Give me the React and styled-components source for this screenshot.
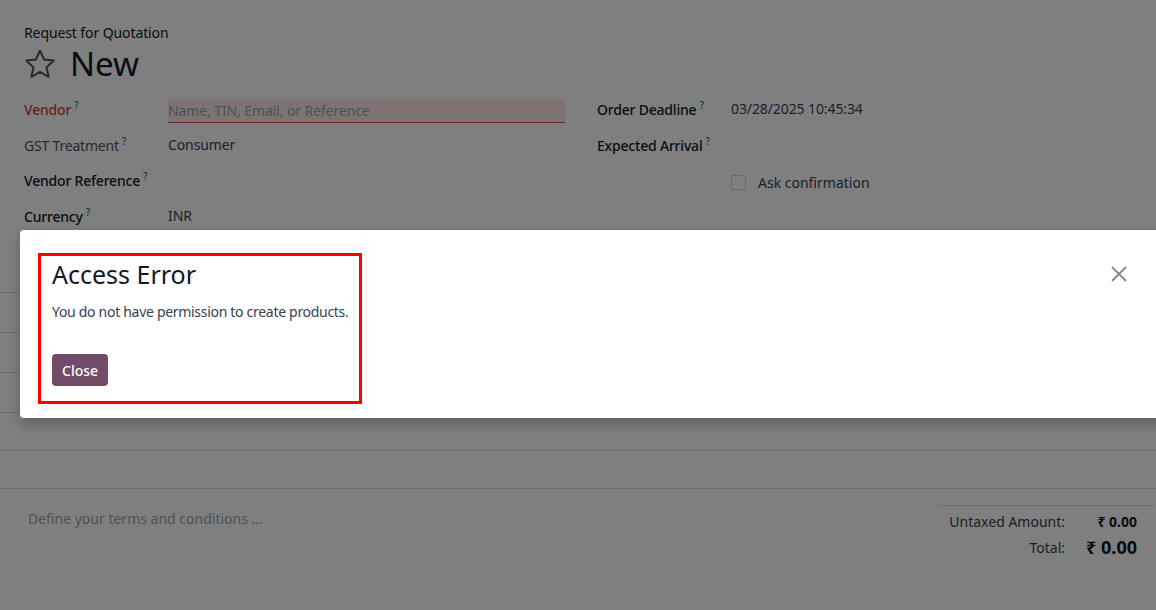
import React from "react";
import styled, { createGlobalStyle } from "styled-components";

const Global = createGlobalStyle`
  html, body { margin: 0; padding: 0; }
  body {
    width: 1156px; height: 610px; overflow: hidden;
    font-family: "Noto Sans", "DejaVu Sans", sans-serif;
    font-size: 14px; color: #374151; background: #fff;
  }
`;

const Page = styled.div`
  position: relative;
  width: 1156px;
  height: 610px;
  background: #fff;
  overflow: hidden;
`;

const Sheet = styled.div`
  padding: 24px 0 0 0;
`;

const Header = styled.div`
  padding: 0 24px;
`;

const Kicker = styled.div`
  font-size: 14px;
  color: #111827;
  line-height: 18px;
  letter-spacing: -0.1px;
`;

const TitleRow = styled.div`
  display: flex;
  align-items: center;
  gap: 14px;
  margin-top: 2px;
  height: 40px;
`;

const Title = styled.h1`
  margin: 0;
  font-size: 33px;
  font-weight: 400;
  color: #111827;
  line-height: 40px;
`;

const Groups = styled.div`
  display: grid;
  grid-template-columns: 573px 1fr;
  padding: 0 24px;
  margin-top: 6px;
`;

const Group = styled.div`
  display: grid;
  grid-template-columns: ${(p) => p.$label}px 1fr;
  grid-template-rows: ${(p) => p.$rows};
  align-items: center;
  padding-right: ${(p) => p.$pr || 0}px;
`;

const Label = styled.div`
  font-size: 14px;
  font-weight: ${(p) => (p.$light ? 400 : 500)};
  color: ${(p) => (p.$invalid ? "#d23f3a" : p.$light ? "#4b5563" : "#111827")};
  white-space: nowrap;
  letter-spacing: -0.2px;
`;

const Help = styled.sup`
  color: #017e84;
  font-size: 10px;
  margin-left: 3px;
  font-weight: 500;
`;

const Value = styled.div`
  font-size: 14px;
  color: #374151;
  letter-spacing: -0.1px;
`;

const VendorInput = styled.div`
  height: 23px;
  margin-top: 5px;
  background: #ffe5e5;
  border-bottom: 1px solid #d23f3a;
  color: #9ca3af;
  display: flex;
  align-items: center;
  font-size: 14px;
  letter-spacing: -0.1px;
`;

const CheckRow = styled.div`
  display: flex;
  align-items: center;
  gap: 12px;
  color: #374151;
`;

const Box = styled.span`
  width: 13px;
  height: 13px;
  border: 1px solid #d1d5db;
  border-radius: 2px;
  background: #fff;
`;

const Lines = styled.div`
  margin-top: 58px;
`;

const Line = styled.div`
  height: ${(p) => p.$h}px;
  border-bottom: 1px solid #d8dadd;
`;

const Bottom = styled.div`
  display: flex;
  justify-content: space-between;
  padding: 16px 2px 0 28px;
`;

const Terms = styled.div`
  color: #9ca3af;
  font-size: 14px;
  padding-top: 4px;
`;

const Totals = styled.div`
  width: 199px;
  border-top: 1px solid #d8dadd;
  padding-top: 6px;
  padding-right: 17px;
  display: grid;
  grid-template-columns: 1fr 72px;
  row-gap: 4px;
  align-items: center;
`;

const TotLabel = styled.div`
  text-align: right;
  color: #374151;
  font-size: 14px;
`;

const TotValue = styled.div`
  text-align: right;
  font-weight: 700;
  color: #111827;
  font-size: ${(p) => (p.$big ? 18 : 14)}px;
`;

const Backdrop = styled.div`
  position: absolute;
  inset: 0;
  background: rgba(0, 0, 0, 0.5);
`;

const Modal = styled.div`
  position: absolute;
  left: 20px;
  top: 230px;
  width: 1160px;
  height: 188px;
  background: #fff;
  border-radius: 4px;
  box-shadow: 0 6px 14px rgba(0, 0, 0, 0.25);
  padding: 23px 0 0 18px;
  box-sizing: border-box;
`;

const Highlight = styled.div`
  width: 324px;
  height: 151px;
  box-sizing: border-box;
  border: 3px solid #ff0000;
  padding: 2px 0 0 11px;
`;

const ModalTitle = styled.h4`
  margin: 0;
  font-size: 25px;
  font-weight: 400;
  color: #111827;
  line-height: 32px;
`;

const ModalBody = styled.p`
  margin: 12px 0 0;
  font-size: 14px;
  color: #374151;
  line-height: 20px;
  white-space: nowrap;
  letter-spacing: -0.3px;
`;

const Button = styled.button`
  margin-top: 32px;
  height: 32px;
  padding: 0 10px;
  background: #714b67;
  color: #fff;
  border: none;
  border-radius: 4px;
  font-family: inherit;
  font-size: 14px;
  font-weight: 500;
  display: block;
`;

const CloseX = styled.button`
  position: absolute;
  right: 51px;
  top: 34px;
  width: 20px;
  height: 20px;
  padding: 0;
  border: none;
  background: transparent;
  display: flex;
  align-items: center;
  justify-content: center;
`;

const Star = () => (
  <svg width="32" height="30" viewBox="0 0 32 30" fill="none">
    <path
      d="M16 1.8 L20.2 10.6 L29.8 11.6 L22.6 18.2 L24.6 27.8 L16 22.9 L7.4 27.8 L9.4 18.2 L2.2 11.6 L11.8 10.6 Z"
      stroke="#4b5563"
      strokeWidth="2"
      strokeLinejoin="round"
    />
  </svg>
);

export default function App() {
  return (
    <>
      <Global />
      <Page>
        <Sheet>
          <Header>
            <Kicker>Request for Quotation</Kicker>
            <TitleRow>
              <Star />
              <Title>New</Title>
            </TitleRow>
          </Header>
          <Groups>
            <Group $label={144} $pr={32} $rows="36px 36px 34px 38px">
              <Label $invalid>
                Vendor<Help>?</Help>
              </Label>
              <VendorInput>Name, TIN, Email, or Reference</VendorInput>
              <Label $light>
                GST Treatment<Help>?</Help>
              </Label>
              <Value>Consumer</Value>
              <Label>
                Vendor Reference<Help>?</Help>
              </Label>
              <Value />
              <Label>
                Currency<Help>?</Help>
              </Label>
              <Value>INR</Value>
            </Group>
            <Group $label={134} $rows="36px 36px 40px">
              <Label>
                Order Deadline<Help>?</Help>
              </Label>
              <Value>03/28/2025 10:45:34</Value>
              <Label>
                Expected Arrival<Help>?</Help>
              </Label>
              <Value />
              <span />
              <CheckRow>
                <Box />
                Ask confirmation
              </CheckRow>
            </Group>
          </Groups>
          <Lines>
            <Line $h={0} />
            <Line $h={39} />
            <Line $h={39} />
            <Line $h={39} />
            <Line $h={37} />
            <Line $h={37} />
          </Lines>
          <Bottom>
            <Terms>Define your terms and conditions ...</Terms>
            <Totals>
              <TotLabel>Untaxed Amount:</TotLabel>
              <TotValue>₹ 0.00</TotValue>
              <TotLabel>Total:</TotLabel>
              <TotValue $big>₹ 0.00</TotValue>
            </Totals>
          </Bottom>
        </Sheet>
        <Backdrop />
        <Modal>
          <Highlight>
            <ModalTitle>Access Error</ModalTitle>
            <ModalBody>You do not have permission to create products.</ModalBody>
            <Button>Close</Button>
          </Highlight>
          <CloseX aria-label="Close">
            <svg width="16" height="16" viewBox="0 0 16 16">
              <path d="M1 1 L15 15 M15 1 L1 15" stroke="#888" strokeWidth="1.8" />
            </svg>
          </CloseX>
        </Modal>
      </Page>
    </>
  );
}
